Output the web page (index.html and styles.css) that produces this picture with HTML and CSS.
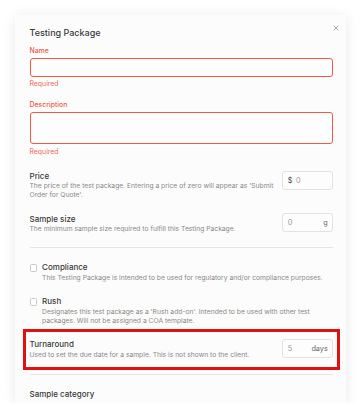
FILE: index.html
```html
<!DOCTYPE html>
<html lang="en">
<head>
<meta charset="utf-8">
<title>Testing Package</title>
<link rel="stylesheet" href="styles.css">
</head>
<body>
<div class="modal">
  <button class="close" aria-label="Close">
    <svg viewBox="0 0 10 10" width="6" height="6"><path d="M1 1L9 9M9 1L1 9" stroke="#8a8a8a" stroke-width="1.2" fill="none"/></svg>
  </button>
  <h2 class="title">Testing Package</h2>

  <div class="field">
    <label class="flabel err">Name</label>
    <div class="input err-input"></div>
    <div class="ferr">Required</div>
  </div>

  <div class="field field-desc">
    <label class="flabel err">Description</label>
    <div class="textarea err-input"></div>
    <div class="ferr">Required</div>
  </div>

  <div class="rows">
    <div class="row">
      <div class="rtext">
        <div class="rlabel">Price</div>
        <div class="rdesc">The price of the test package. Entering a price of zero will appear as 'Submit Order for Quote'.</div>
      </div>
      <div class="box"><span class="pre">$</span><span class="val">0</span></div>
    </div>

    <div class="row">
      <div class="rtext">
        <div class="rlabel">Sample size</div>
        <div class="rdesc">The minimum sample size required to fulfill this Testing Package.</div>
      </div>
      <div class="box"><span class="val">0</span><span class="suf">g</span></div>
    </div>
  </div>

  <hr class="divider first">

  <div class="rows">
    <div class="check">
      <span class="cb"></span>
      <div class="rtext">
        <div class="rlabel">Compliance</div>
        <div class="rdesc">This Testing Package is intended to be used for regulatory and/or compliance purposes.</div>
      </div>
    </div>

    <div class="check">
      <span class="cb"></span>
      <div class="rtext">
        <div class="rlabel">Rush</div>
        <div class="rdesc">Designates this test package as a 'Rush add-on'. Intended to be used with other test packages. Will not be assigned a COA template.</div>
      </div>
    </div>
  </div>

  <div class="highlight">
    <div class="row">
      <div class="rtext">
        <div class="rlabel">Turnaround</div>
        <div class="rdesc">Used to set the due date for a sample. This is not shown to the client.</div>
      </div>
      <div class="box"><span class="val">5</span><span class="suf">days</span></div>
    </div>
  </div>

  <hr class="divider second">

  <div class="rlabel section">Sample category</div>
</div>
</body>
</html>
```

FILE: styles.css
```css
* { box-sizing: border-box; }

html, body {
  margin: 0;
  padding: 0;
  background: #ffffff;
}

body {
  font-family: Inter, "Noto Sans", sans-serif;
  color: #333333;
  padding: 15px 15px 0 15px;
}

.modal {
  position: relative;
  width: 331px;
  height: 388px;
  overflow: hidden;
  background: #fcfcfc;
  border-radius: 2px;
  box-shadow: 0 2px 14px rgba(0, 0, 0, 0.09);
  padding: 11px 12.7px 0 14.5px;
}

.close {
  position: absolute;
  top: 9.5px;
  right: 7px;
  width: 6px;
  height: 6px;
  padding: 0;
  border: 0;
  background: none;
  display: flex;
}

.title {
  margin: 0;
  font-size: 9px;
  line-height: 14px;
  font-weight: 500;
  color: #3a3a3a;
}

.field {
  display: flex;
  flex-direction: column;
  margin-top: 5.8px;
}

.field-desc {
  margin-top: 12.1px;
}

.flabel {
  font-size: 6.9px;
  line-height: 9.2px;
  font-weight: 500;
}

.err { color: #ee5a4a; }

.input, .textarea {
  margin-top: 2.5px;
  height: 19px;
  border-radius: 3px;
  background: #fdfdfd;
}

.textarea { height: 32.6px; }

.err-input {
  border: 1px solid #f05a45;
}

.ferr {
  margin-top: 2.3px;
  font-size: 6.9px;
  line-height: 9.2px;
  color: #ee6a5b;
}

.rows {
  display: flex;
  flex-direction: column;
  gap: 13.8px;
  margin-top: 15px;
}

.row {
  display: flex;
  align-items: flex-start;
  gap: 6px;
}

.rtext {
  flex: 1;
  min-width: 0;
}

.rlabel {
  font-size: 8px;
  line-height: 11.5px;
  font-weight: 500;
  color: #3a3a3a;
}

.rdesc {
  font-size: 6.74px;
  line-height: 8.7px;
  color: #8a8a8a;
}

.box {
  flex: none;
  width: 51px;
  height: 18.8px;
  border: 1px solid #e3e3e3;
  border-radius: 3px;
  background: #fdfdfd;
  display: flex;
  align-items: center;
  padding: 0 4.5px;
  font-size: 7.3px;
  margin-top: -0.2px;
}

.pre {
  color: #444444;
  margin-right: 3.5px;
}

.val {
  color: #9a9a9a;
  flex: 1;
}

.suf {
  color: #666666;
}

.divider {
  border: 0;
  border-top: 1px solid #e6e6e6;
  margin: 13px 0 0 0;
  height: 0;
}

.divider.first + .rows {
  margin-top: 14.5px;
}

.check {
  display: flex;
  align-items: flex-start;
  gap: 5px;
}

.cb {
  flex: none;
  width: 7.6px;
  height: 7.6px;
  margin-top: 2px;
  border: 1px solid #c9c9c9;
  border-radius: 1.6px;
  background: #ffffff;
}

.highlight {
  margin: 6.6px -3.7px 0 -3.7px;
  padding: 7.3px 3.7px 7.8px 3.7px;
  outline: 3px solid #e0120f;
}

.divider.second {
  margin-top: 7.3px;
  margin-left: 0;
  margin-right: 0;
}

.section {
  margin-top: 13.4px;
}
```
